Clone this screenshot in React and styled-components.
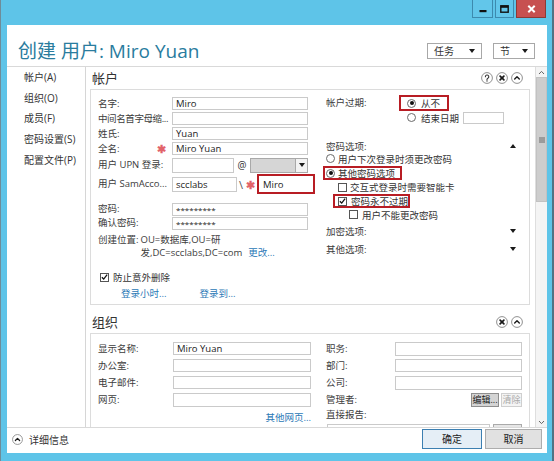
import React from "react";
import styled, { createGlobalStyle } from "styled-components";

const FONT = `"Open Sans", "Noto Sans CJK SC", sans-serif`;

const GlobalStyle = createGlobalStyle`
  html, body { margin: 0; padding: 0; background: #ffffff; }
  #root { width: 554px; height: 461px; }
  * { box-sizing: border-box; }
`;

const Window = styled.div`
  width: 554px;
  height: 461px;
  background: #5ec4e8;
  border-left: 1px solid #6e8c99;
  border-right: 2px solid #4f7384;
  display: flex;
  flex-direction: column;
  font-family: ${FONT};
  color: #3a3a3a;
  overflow: hidden;
`;

const TitleBar = styled.div`
  height: 25px;
  flex: none;
  display: flex;
  justify-content: flex-end;
  align-items: flex-start;
  padding-right: 6px;
  gap: 2px;
`;

const CaptionButton = styled.div`
  width: ${(p) => p.$w}px;
  height: 18px;
  border: 1px solid ${(p) => (p.$close ? "#8c3a36" : "#3d8aae")};
  border-top: none;
  background: ${(p) => (p.$close ? "#c75050" : "#62c6ea")};
  display: flex;
  align-items: center;
  justify-content: center;
`;

const Client = styled.div`
  flex: 1;
  min-height: 0;
  margin: 0 5px 8px 6px;
  background: #ffffff;
  display: flex;
  flex-direction: column;
`;

const Header = styled.div`
  height: 42px;
  flex: none;
  border-bottom: 1px solid #d9d9d9;
  display: flex;
  align-items: center;
  padding: 10px 12px 0 11px;
`;

const Title = styled.div`
  flex: 1;
  font-size: 19px;
  line-height: 22px;
  color: #2a7c9e;
  white-space: nowrap;
`;

const MenuButton = styled.div`
  width: ${(p) => p.$w}px;
  height: 16px;
  margin-left: ${(p) => p.$ml || 0}px;
  border: 1px solid #a8a8a8;
  background: #ffffff;
  font-size: 10px;
  color: #333;
  display: flex;
  align-items: center;
  justify-content: space-between;
  padding: 0 6px 0 6px;
`;

const Caret = styled.span`
  display: inline-block;
  width: 0;
  height: 0;
  border-left: 3.5px solid transparent;
  border-right: 3.5px solid transparent;
  ${(p) =>
    p.$up
      ? "border-bottom: 4px solid #1a1a1a;"
      : "border-top: 4px solid #1a1a1a;"}
`;

const Body = styled.div`
  flex: 1;
  min-height: 0;
  display: flex;
`;

const Nav = styled.div`
  width: 79px;
  flex: none;
  border-right: 1px solid #d6d6d6;
  padding-left: 17px;
`;

const NavItem = styled.div`
  height: 20.7px;
  line-height: 20.7px;
  font-size: 10px;
  color: #333;
  white-space: nowrap;
`;

const ScrollArea = styled.div`
  flex: 1;
  min-width: 0;
  overflow: hidden;
  padding: 0 5px 0 4px;
`;

const Section = styled.div`
  margin-top: ${(p) => p.$mt || 0}px;
`;

const SectionHead = styled.div`
  height: 22px;
  display: flex;
  align-items: center;
  padding: 0 7px 0 2px;
`;

const SectionTitle = styled.div`
  flex: 1;
  font-size: 13px;
  line-height: 20px;
  color: #333;
`;

const HeadIcons = styled.div`
  display: flex;
  gap: 3px;
  align-items: center;
`;

const SectionBox = styled.div`
  border: 1px solid #dcdcdc;
  display: grid;
  grid-template-columns: 218px 196px;
  column-gap: 10px;
  padding: 0 7px;
`;

const Column = styled.div`
  display: flex;
  flex-direction: column;
  padding-top: ${(p) => p.$pt || 0}px;
  padding-bottom: ${(p) => p.$pb || 0}px;
`;

const FieldRow = styled.div`
  display: flex;
  align-items: center;
  height: ${(p) => p.$h || 15}px;
  margin-top: ${(p) => p.$mt || 0}px;
  padding-left: ${(p) => p.$pl || 0}px;
  justify-content: ${(p) => p.$justify || "flex-start"};
  flex: none;
`;

const Label = styled.div`
  width: ${(p) => p.$w || 74}px;
  flex: none;
  font-size: 9.5px;
  line-height: ${(p) => p.$lh || 14}px;
  letter-spacing: ${(p) => (p.$tight ? "-0.4px" : "0")};
  color: #3c3c3c;
  white-space: nowrap;
  overflow: visible;
  display: flex;
  align-items: center;
`;

const Required = styled.span`
  margin-left: auto;
  margin-right: 6px;
  color: #e2636a;
  font-size: 11px;
  line-height: 12px;
  font-weight: bold;
`;

const TextBox = styled.div`
  width: ${(p) => p.$w}px;
  height: ${(p) => p.$h || 13}px;
  flex: none;
  border: 1px solid #cacaca;
  background: #ffffff;
  font-size: ${(p) => p.$fs || 9.5}px;
  line-height: ${(p) => (p.$h || 13) - 2}px;
  color: #222;
  padding-left: 3px;
  white-space: nowrap;
  overflow: hidden;
  margin-left: ${(p) => p.$ml || 0}px;
`;

const MarkedBox = styled(TextBox)`
  border: 2px solid #b81d24;
  padding-left: 4px;
`;

const AtSign = styled.span`
  width: 16px;
  text-align: center;
  font-size: 10px;
  color: #333;
`;

const Select = styled.div`
  width: 58px;
  height: 15px;
  display: flex;
  border: 1px solid #a9a9a9;
  background: #d6d6d6;
`;

const SelectArrow = styled.div`
  margin-left: auto;
  width: 12px;
  border-left: 1px solid #a9a9a9;
  background: #f3f3f3;
  display: flex;
  align-items: center;
  justify-content: center;
`;

const Slash = styled.span`
  width: 8px;
  text-align: center;
  font-size: 11px;
  color: #555;
`;

const SamRequired = styled.span`
  width: 10px;
  margin-right: 2px;
  text-align: center;
  color: #e2636a;
  font-size: 11px;
  font-weight: bold;
`;

const LocationRow = styled.div`
  display: flex;
  align-items: flex-start;
  margin-top: 3px;
  font-size: 9.5px;
  line-height: 13px;
  color: #3c3c3c;
`;

const LocationLabel = styled.span`
  flex: none;
  margin-right: 2px;
`;

const LocationValue = styled.span`
  white-space: nowrap;
`;

const Link = styled.span`
  color: #2a78b6;
  font-size: 9.5px;
  margin-left: ${(p) => p.$ml || 0}px;
  margin-right: ${(p) => p.$mr || 0}px;
  white-space: nowrap;
`;

const CheckText = styled.span`
  font-size: 9.5px;
  color: #333;
  margin-left: ${(p) => p.$gap || 4}px;
  white-space: nowrap;
`;

const BoxMark = styled.div`
  width: 9px;
  height: 9px;
  flex: none;
  border: 1px solid #555;
  background: #fff;
  display: flex;
  align-items: center;
  justify-content: center;
  margin-left: ${(p) => p.$ml || 0}px;
`;

const RadioMark = styled.div`
  width: 9px;
  height: 9px;
  flex: none;
  border-radius: 50%;
  border: 1px solid #6a6a6a;
  background: #fff;
  display: flex;
  align-items: center;
  justify-content: center;
  &::after {
    content: "";
    width: 4px;
    height: 4px;
    border-radius: 50%;
    background: ${(p) => (p.$on ? "#111" : "transparent")};
  }
`;

const Highlight = styled.div`
  display: flex;
  align-items: center;
  width: ${(p) => p.$w}px;
  height: ${(p) => p.$h || 14}px;
  border: 2px solid #b81d24;
  margin-left: ${(p) => p.$ml || 0}px;
  margin-top: ${(p) => p.$mt || 0}px;
  padding-left: ${(p) => p.$pl || 0}px;
  flex: none;
`;

const ExpiryRow = styled.div`
  display: flex;
  align-items: flex-start;
`;

const ExpiryGroup = styled.div`
  display: flex;
  flex-direction: column;
`;

const OptionHead = styled.div`
  display: flex;
  align-items: center;
  justify-content: space-between;
  height: ${(p) => p.$h || 14}px;
  margin-top: ${(p) => p.$mt || 0}px;
  font-size: 9.5px;
  color: #3c3c3c;
  padding-right: 6px;
  flex: none;
`;

const SmallButton = styled.div`
  width: ${(p) => p.$w}px;
  height: 14px;
  margin-left: ${(p) => p.$ml || 0}px;
  border: 1px solid ${(p) => (p.$disabled ? "#cfcfcf" : "#8e8e8e")};
  background: ${(p) => (p.$disabled ? "#f4f4f4" : "#d4d4d4")};
  color: ${(p) => (p.$disabled ? "#a8a8a8" : "#222")};
  font-size: 9px;
  line-height: 12px;
  text-align: center;
  white-space: nowrap;
`;

const ListRow = styled.div`
  display: flex;
  margin-top: 2px;
  margin-left: 1px;
  gap: 3px;
`;

const ListBox = styled.div`
  width: 163px;
  height: 40px;
  border: 1px solid #cacaca;
`;

const ListButton = styled.div`
  width: 29px;
  height: 16px;
  border: 1px solid #aaaaaa;
  background: #e6e6e6;
`;

const ScrollBar = styled.div`
  width: 12px;
  flex: none;
  background: #f4f4f4;
  border-left: 1px solid #dedede;
  display: flex;
  flex-direction: column;
`;

const ScrollArrow = styled.div`
  height: 10px;
  flex: none;
  display: flex;
  align-items: center;
  justify-content: center;
`;

const ScrollThumb = styled.div`
  height: 125px;
  flex: none;
  background: #cdcdcd;
  border: 1px solid #c2c2c2;
  display: flex;
  align-items: center;
  justify-content: center;
`;

const ScrollTrack = styled.div`
  flex: 1;
`;

const Footer = styled.div`
  height: 26px;
  flex: none;
  border-top: 1px solid #d9d9d9;
  display: flex;
  align-items: center;
  padding: 0 5px 3px 5px;
`;

const Details = styled.div`
  flex: 1;
  display: flex;
  align-items: center;
  gap: 6px;
  font-size: 10px;
  color: #333;
`;

const DialogButton = styled.div`
  width: ${(p) => p.$w}px;
  height: 20px;
  margin-left: ${(p) => p.$ml || 0}px;
  border: 1px solid ${(p) => (p.$primary ? "#3c7fb1" : "#adadad")};
  background: ${(p) => (p.$primary ? "#e5eef6" : "#e1e1e1")};
  font-size: 10px;
  line-height: 18px;
  text-align: center;
  color: #222;
`;

/* ---------- icons ---------- */

const RoundIcon = ({ children, size = 12 }) => (
  <svg width={size} height={size} viewBox="0 0 12 12">
    <circle cx="6" cy="6" r="5.4" fill="#fff" stroke="#858585" strokeWidth="0.9" />
    {children}
  </svg>
);

const HelpIcon = () => (
  <RoundIcon>
    <path
      d="M4.4 4.7a1.7 1.7 0 1 1 2.5 1.5c-.6.3-.9.6-.9 1.2v.4"
      fill="none"
      stroke="#333"
      strokeWidth="1.1"
      strokeLinecap="round"
    />
    <circle cx="6" cy="9" r="0.65" fill="#333" />
  </RoundIcon>
);

const RemoveIcon = () => (
  <RoundIcon>
    <path d="M4.1 4.1L7.9 7.9M7.9 4.1L4.1 7.9" stroke="#1a1a1a" strokeWidth="1.7" strokeLinecap="round" />
  </RoundIcon>
);

const CollapseIcon = ({ size = 12 }) => (
  <RoundIcon size={size}>
    <path d="M3.7 7.1L6 4.8L8.3 7.1" fill="none" stroke="#1a1a1a" strokeWidth="1.4" strokeLinecap="round" strokeLinejoin="round" />
  </RoundIcon>
);

const Tick = () => (
  <svg width="8" height="8" viewBox="0 0 8 8">
    <path d="M1 4.2L3.1 6.4L7 1.3" fill="none" stroke="#111" strokeWidth="1.5" />
  </svg>
);

const Chevron = ({ down }) => (
  <svg width="7" height="5" viewBox="0 0 7 5">
    <path d={down ? "M1 1L3.5 3.6L6 1" : "M1 4L3.5 1.4L6 4"} fill="none" stroke="#666" strokeWidth="1" />
  </svg>
);

const Grip = () => (
  <svg width="6" height="6" viewBox="0 0 6 6">
    <path d="M0 1h6M0 3h6M0 5h6" stroke="#6a6a6a" strokeWidth="1" />
  </svg>
);

const MinGlyph = () => (
  <svg width="8" height="8" viewBox="0 0 8 8">
    <rect x="0.5" y="5" width="7" height="2.2" fill="#111" />
  </svg>
);

const MaxGlyph = () => (
  <svg width="9" height="8" viewBox="0 0 9 8">
    <rect x="0.8" y="0.8" width="7.4" height="6.4" fill="none" stroke="#111" strokeWidth="1.4" />
    <rect x="0.8" y="0.8" width="7.4" height="2" fill="#111" />
  </svg>
);

const CloseGlyph = () => (
  <svg width="9" height="8" viewBox="0 0 9 8">
    <path d="M1.3 0.8L7.7 7.2M7.7 0.8L1.3 7.2" stroke="#fff" strokeWidth="2" />
  </svg>
);

/* ---------- parts ---------- */

const Checkbox = ({ on, ml, children, gap }) => (
  <>
    <BoxMark $ml={ml}>{on && <Tick />}</BoxMark>
    <CheckText $gap={gap}>{children}</CheckText>
  </>
);

const Radio = ({ on, children, gap = 3 }) => (
  <>
    <RadioMark $on={on} />
    <CheckText $gap={gap}>{children}</CheckText>
  </>
);

export default function App() {
  return (
    <>
      <GlobalStyle />
      <Window>
        <TitleBar>
          <CaptionButton $w={21}>
            <MinGlyph />
          </CaptionButton>
          <CaptionButton $w={19}>
            <MaxGlyph />
          </CaptionButton>
          <CaptionButton $w={30} $close>
            <CloseGlyph />
          </CaptionButton>
        </TitleBar>
        <Client>
          <Header>
            <Title>创建 用户: Miro Yuan</Title>
            <MenuButton $w={55}>
              任务 <Caret />
            </MenuButton>
            <MenuButton $w={42} $ml={11}>
              节 <Caret />
            </MenuButton>
          </Header>
          <Body>
            <Nav>
              <NavItem>帐户(A)</NavItem>
              <NavItem>组织(O)</NavItem>
              <NavItem>成员(F)</NavItem>
              <NavItem>密码设置(S)</NavItem>
              <NavItem>配置文件(P)</NavItem>
            </Nav>
            <ScrollArea>
              <Section>
                <SectionHead>
                  <SectionTitle>帐户</SectionTitle>
                  <HeadIcons>
                    <HelpIcon />
                    <RemoveIcon />
                    <CollapseIcon />
                  </HeadIcons>
                </SectionHead>
                <SectionBox>
                  <Column $pt={6} $pb={4}>
                    <FieldRow>
                      <Label>名字:</Label>
                      <TextBox $w={136}>Miro</TextBox>
                    </FieldRow>
                    <FieldRow>
                      <Label $tight>中间名首字母缩...</Label>
                      <TextBox $w={136} />
                    </FieldRow>
                    <FieldRow>
                      <Label>姓氏:</Label>
                      <TextBox $w={136}>Yuan</TextBox>
                    </FieldRow>
                    <FieldRow>
                      <Label>
                        全名:<Required>✱</Required>
                      </Label>
                      <TextBox $w={136}>Miro Yuan</TextBox>
                    </FieldRow>
                    <FieldRow $h={16} $mt={1}>
                      <Label>用户 UPN 登录:</Label>
                      <TextBox $w={62} $h={15} />
                      <AtSign>@</AtSign>
                      <Select>
                        <SelectArrow>
                          <Caret />
                        </SelectArrow>
                      </Select>
                    </FieldRow>
                    <FieldRow $h={20} $mt={1}>
                      <Label>用户 SamAcco...</Label>
                      <TextBox $w={65} $h={15}>scclabs</TextBox>
                      <Slash>\</Slash>
                      <SamRequired>✱</SamRequired>
                      <MarkedBox $w={58} $h={20}>Miro</MarkedBox>
                    </FieldRow>
                    <FieldRow $h={14} $mt={8}>
                      <Label>密码:</Label>
                      <TextBox $w={136} $fs={8}>*********</TextBox>
                    </FieldRow>
                    <FieldRow $h={14}>
                      <Label>确认密码:</Label>
                      <TextBox $w={136} $fs={8}>*********</TextBox>
                    </FieldRow>
                    <LocationRow>
                      <LocationLabel>创建位置:</LocationLabel>
                      <LocationValue>
                        OU=数据库,OU=研
                        <br />
                        发,DC=scclabs,DC=com
                        <Link $ml={6}>更改...</Link>
                      </LocationValue>
                    </LocationRow>
                    <FieldRow $h={14} $mt={11}>
                      <Checkbox on ml={2} gap={4}>
                        防止意外删除
                      </Checkbox>
                    </FieldRow>
                    <FieldRow $h={14} $mt={2} $pl={23}>
                      <Link>登录小时...</Link>
                      <Link $ml={33}>登录到...</Link>
                    </FieldRow>
                  </Column>
                  <Column $pt={5}>
                    <ExpiryRow>
                      <Label $w={73} $lh={16}>
                        帐户过期:
                      </Label>
                      <ExpiryGroup>
                        <Highlight $w={50} $h={16} $pl={6}>
                          <Radio on gap={5}>
                            从不
                          </Radio>
                        </Highlight>
                        <FieldRow $h={13} $pl={8}>
                          <Radio gap={5}>结束日期</Radio>
                          <TextBox $w={41} $h={12} $ml={4} />
                        </FieldRow>
                      </ExpiryGroup>
                    </ExpiryRow>
                    <OptionHead $mt={15} $h={13}>
                      密码选项:
                      <Caret $up />
                    </OptionHead>
                    <FieldRow $h={13}>
                      <Radio>用户下次登录时须更改密码</Radio>
                    </FieldRow>
                    <Highlight $w={79} $h={14} $ml={-3} $mt={1} $pl={1}>
                      <Radio on>其他密码选项</Radio>
                    </Highlight>
                    <FieldRow $h={14} $pl={12}>
                      <Checkbox gap={3}>交互式登录时需要智能卡</Checkbox>
                    </FieldRow>
                    <Highlight $w={77} $h={14} $ml={7} $pl={3}>
                      <Checkbox on gap={4}>
                        密码永不过期
                      </Checkbox>
                    </Highlight>
                    <FieldRow $h={13} $pl={23}>
                      <Checkbox gap={4}>用户不能更改密码</Checkbox>
                    </FieldRow>
                    <OptionHead $mt={3}>
                      加密选项:
                      <Caret />
                    </OptionHead>
                    <OptionHead $mt={4}>
                      其他选项:
                      <Caret />
                    </OptionHead>
                  </Column>
                </SectionBox>
              </Section>

              <Section $mt={6}>
                <SectionHead>
                  <SectionTitle>组织</SectionTitle>
                  <HeadIcons>
                    <RemoveIcon />
                    <CollapseIcon />
                  </HeadIcons>
                </SectionHead>
                <SectionBox>
                  <Column $pt={6}>
                    <FieldRow $h={17}>
                      <Label $w={75}>显示名称:</Label>
                      <TextBox $w={138}>Miro Yuan</TextBox>
                    </FieldRow>
                    <FieldRow $h={17}>
                      <Label $w={75}>办公室:</Label>
                      <TextBox $w={138} />
                    </FieldRow>
                    <FieldRow $h={17}>
                      <Label $w={75}>电子邮件:</Label>
                      <TextBox $w={138} />
                    </FieldRow>
                    <FieldRow $h={17}>
                      <Label $w={75}>网页:</Label>
                      <TextBox $w={138} $h={14} />
                    </FieldRow>
                    <FieldRow $h={17} $justify="flex-end">
                      <Link $mr={5}>其他网页...</Link>
                    </FieldRow>
                  </Column>
                  <Column $pt={6}>
                    <FieldRow $h={17}>
                      <Label $w={69}>职务:</Label>
                      <TextBox $w={127} $h={14} />
                    </FieldRow>
                    <FieldRow $h={17}>
                      <Label $w={69}>部门:</Label>
                      <TextBox $w={127} />
                    </FieldRow>
                    <FieldRow $h={17}>
                      <Label $w={69}>公司:</Label>
                      <TextBox $w={127} $h={14} />
                    </FieldRow>
                    <FieldRow $h={17}>
                      <Label $w={69}>管理者:</Label>
                      <SmallButton $w={28} $ml={76}>
                        编辑...
                      </SmallButton>
                      <SmallButton $w={21} $ml={2} $disabled>
                        清除
                      </SmallButton>
                    </FieldRow>
                    <FieldRow $h={14}>
                      <Label $w={69}>直接报告:</Label>
                    </FieldRow>
                    <ListRow>
                      <ListBox />
                      <ListButton />
                    </ListRow>
                  </Column>
                </SectionBox>
              </Section>
            </ScrollArea>
            <ScrollBar>
              <ScrollArrow>
                <Chevron />
              </ScrollArrow>
              <ScrollThumb>
                <Grip />
              </ScrollThumb>
              <ScrollTrack />
              <ScrollArrow>
                <Chevron down />
              </ScrollArrow>
            </ScrollBar>
          </Body>
          <Footer>
            <Details>
              <CollapseIcon size={11} />
              详细信息
            </Details>
            <DialogButton $w={60} $primary>
              确定
            </DialogButton>
            <DialogButton $w={57} $ml={3}>
              取消
            </DialogButton>
          </Footer>
        </Client>
      </Window>
    </>
  );
}
